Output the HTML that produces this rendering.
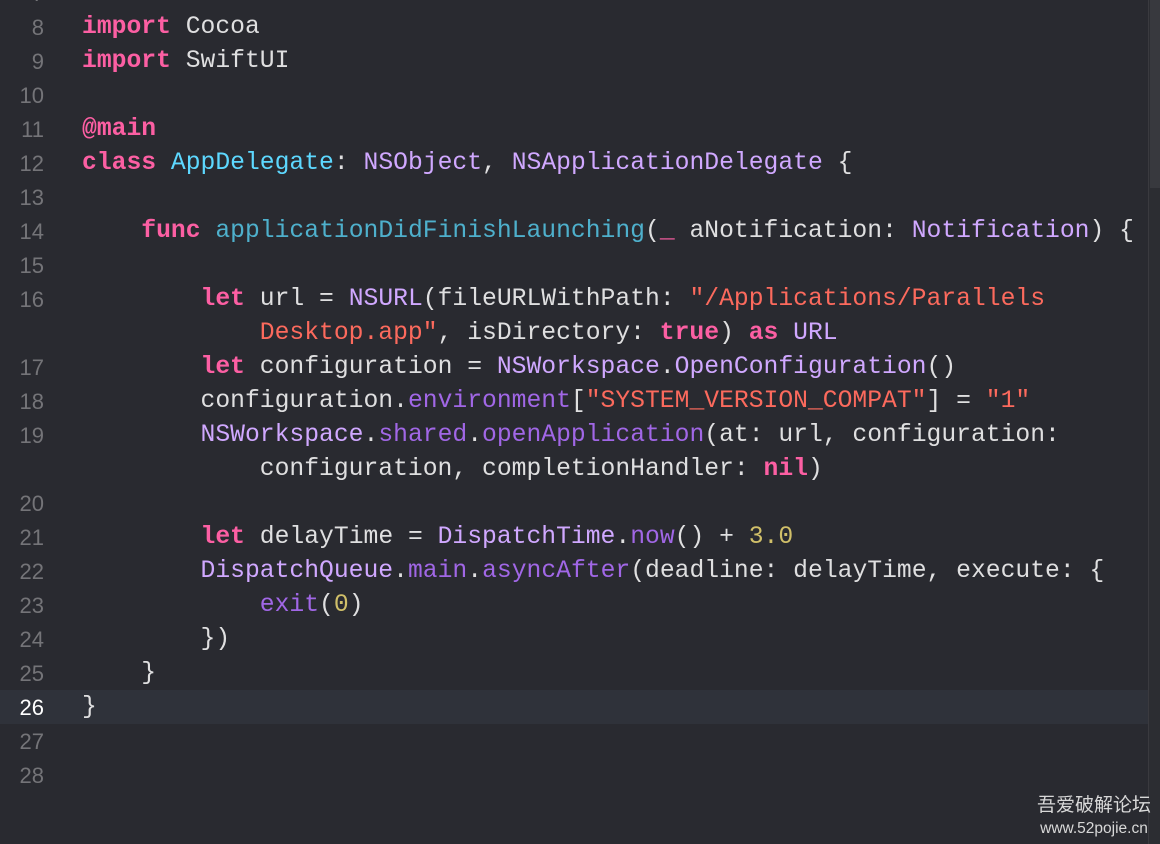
<!DOCTYPE html>
<html><head><meta charset="utf-8"><style>
body{margin:0;width:1160px;height:844px;background:#292a30;overflow:hidden;position:relative;font-family:"Liberation Mono",monospace;}
.r{position:absolute;left:0;width:1148px;height:34px;line-height:35px;font-size:24.7px;color:#dfdfe0;white-space:pre;}
.n{position:absolute;right:1104px;width:50px;text-align:right;color:#747478;font-family:"Liberation Sans",sans-serif;font-size:22px;}
.c{position:absolute;left:82px;}
.k{color:#fc5fa3;font-weight:bold}
.t{color:#5dd8ff}
.d{color:#4eb0cc}
.p{color:#d0a8ff}
.m{color:#a167e6}
.s{color:#fc6a5d}
.u{color:#d0bf69}
.hl{background:#2f323a}
.hl .n{color:#fff}
#sb{position:absolute;left:1148px;top:0;width:12px;height:844px;background:#2c2d32;border-left:1px solid #3a3a3f;}
#th{position:absolute;left:1150px;top:0;width:10px;height:188px;background:#38393e;}
#wm{position:absolute;right:9px;top:794px;color:#d8d8d8;font-family:"Liberation Sans","Noto Sans CJK SC",sans-serif;text-align:center;}
</style></head><body>
<div class="r" style="top:-24px"><span class="n">7</span></div>
<div class="r" style="top:10px"><span class="n">8</span><span class="c"><span class="k">import</span> Cocoa</span></div>
<div class="r" style="top:44px"><span class="n">9</span><span class="c"><span class="k">import</span> SwiftUI</span></div>
<div class="r" style="top:78px"><span class="n">10</span></div>
<div class="r" style="top:112px"><span class="n">11</span><span class="c"><span class="k">@main</span></span></div>
<div class="r" style="top:146px"><span class="n">12</span><span class="c"><span class="k">class</span> <span class="t">AppDelegate</span>: <span class="p">NSObject</span>, <span class="p">NSApplicationDelegate</span> {</span></div>
<div class="r" style="top:180px"><span class="n">13</span></div>
<div class="r" style="top:214px"><span class="n">14</span><span class="c">    <span class="k">func</span> <span class="d">applicationDidFinishLaunching</span>(<span class="k">_</span> aNotification: <span class="p">Notification</span>) {</span></div>
<div class="r" style="top:248px"><span class="n">15</span></div>
<div class="r" style="top:282px"><span class="n">16</span><span class="c">        <span class="k">let</span> url = <span class="p">NSURL</span>(fileURLWithPath: <span class="s">"/Applications/Parallels</span></span></div>
<div class="r" style="top:316px"><span class="c">            <span class="s">Desktop.app"</span>, isDirectory: <span class="k">true</span>) <span class="k">as</span> <span class="p">URL</span></span></div>
<div class="r" style="top:350px"><span class="n">17</span><span class="c">        <span class="k">let</span> configuration = <span class="p">NSWorkspace</span>.<span class="p">OpenConfiguration</span>()</span></div>
<div class="r" style="top:384px"><span class="n">18</span><span class="c">        configuration.<span class="m">environment</span>[<span class="s">"SYSTEM_VERSION_COMPAT"</span>] = <span class="s">"1"</span></span></div>
<div class="r" style="top:418px"><span class="n">19</span><span class="c">        <span class="p">NSWorkspace</span>.<span class="m">shared</span>.<span class="m">openApplication</span>(at: url, configuration:</span></div>
<div class="r" style="top:452px"><span class="c">            configuration, completionHandler: <span class="k">nil</span>)</span></div>
<div class="r" style="top:486px"><span class="n">20</span></div>
<div class="r" style="top:520px"><span class="n">21</span><span class="c">        <span class="k">let</span> delayTime = <span class="p">DispatchTime</span>.<span class="m">now</span>() + <span class="u">3.0</span></span></div>
<div class="r" style="top:554px"><span class="n">22</span><span class="c">        <span class="p">DispatchQueue</span>.<span class="m">main</span>.<span class="m">asyncAfter</span>(deadline: delayTime, execute: {</span></div>
<div class="r" style="top:588px"><span class="n">23</span><span class="c">            <span class="m">exit</span>(<span class="u">0</span>)</span></div>
<div class="r" style="top:622px"><span class="n">24</span><span class="c">        })</span></div>
<div class="r" style="top:656px"><span class="n">25</span><span class="c">    }</span></div>
<div class="r hl" style="top:690px"><span class="n">26</span><span class="c">}</span></div>
<div class="r" style="top:724px"><span class="n">27</span></div>
<div class="r" style="top:758px"><span class="n">28</span></div>
<div id="sb"></div><div id="th"></div>
<div id="wm"><div style="font-size:19px;line-height:24px">吾爱破解论坛</div><div style="font-size:15.5px;line-height:22px">www.52pojie.cn</div></div>
</body></html>
